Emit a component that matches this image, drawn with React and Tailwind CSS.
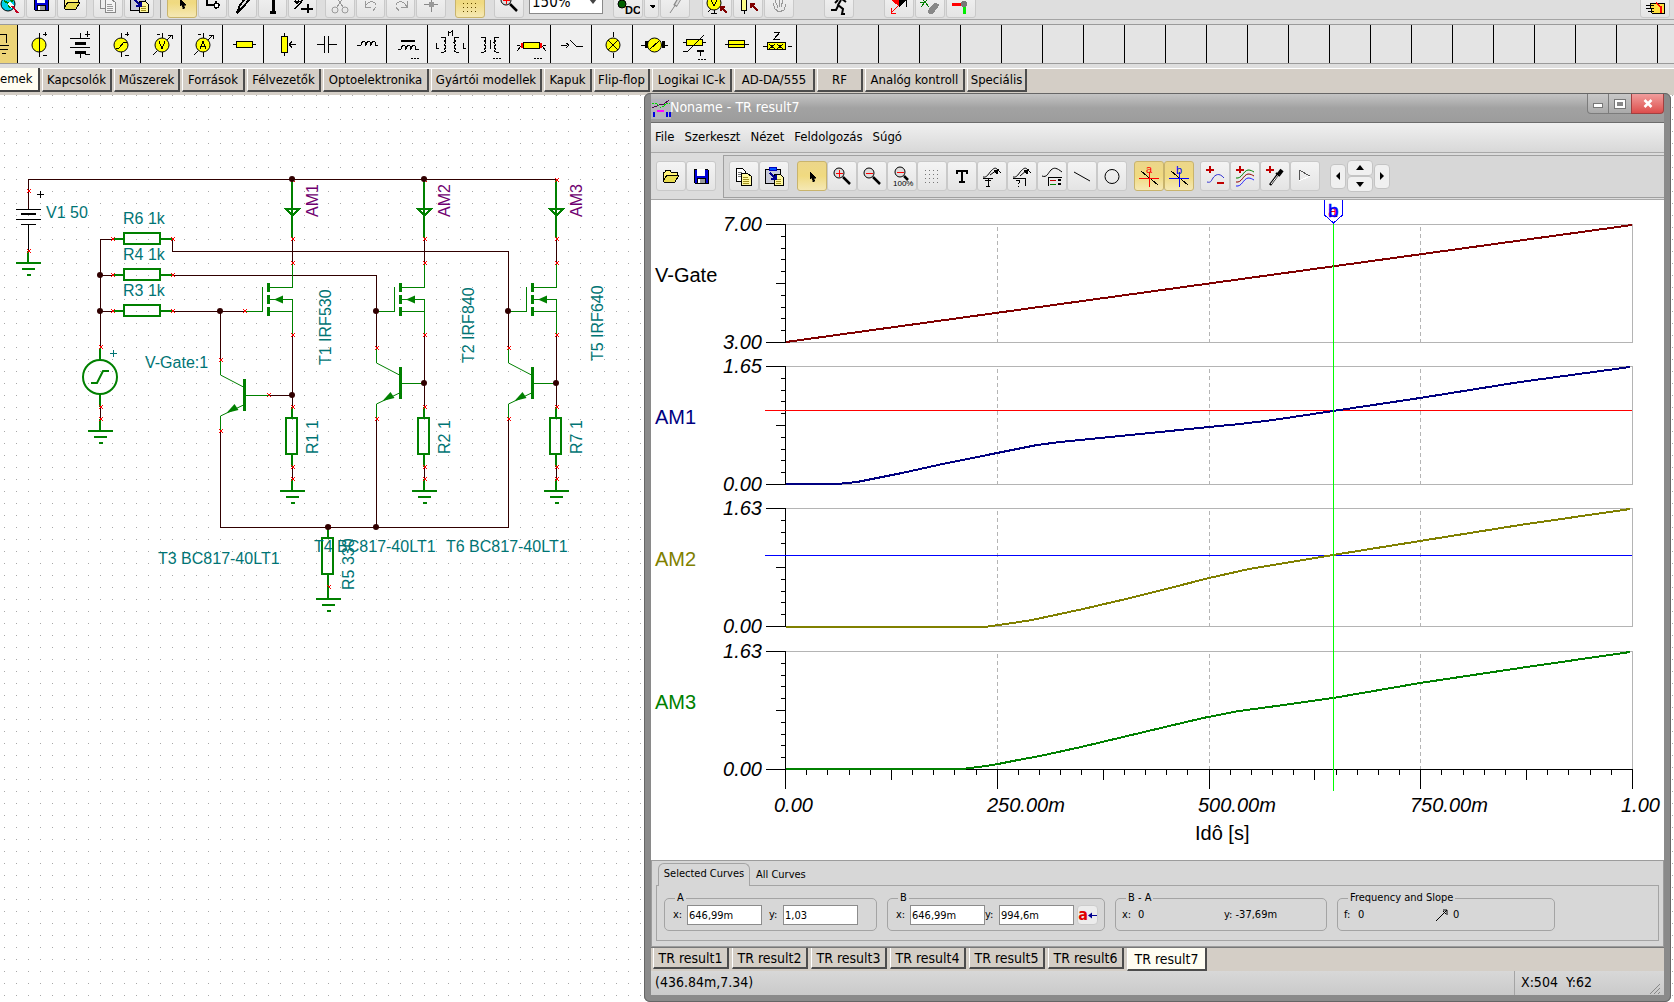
import React, { useState } from 'react';

const GRID = '#b4b4b4';
const COMP = '#008000';
const WIRE = '#300000';
const LABEL = '#007474';

/* ---------- small building blocks ---------- */

function Icon({ children, w = 24, h = 24, className = '' }) {
  return (
    <svg width={w} height={h} viewBox={`0 0 ${w} ${h}`} fill="none" stroke="#000" className={`block shrink-0 ${className}`} shapeRendering="crispEdges">
      {children}
    </svg>
  );
}

function ToolButton({ label, active, children, className = 'w-[30px]' }) {
  return (
    <button
      type="button"
      title={label}
      aria-label={label}
      className={`flex h-[30px] shrink-0 items-center justify-center rounded-[3px] border ${className} ${
        active
          ? 'border-[#c9b46c] bg-gradient-to-b from-[#ecd68a] via-[#f0da80] to-[#f5e8b4]'
          : 'border-[#c9c9c9] bg-gradient-to-b from-[#f4f4f4] to-[#e4e4e4]'
      }`}>
      {children}
    </button>
  );
}

/* ---------- toolbar icons ---------- */

const icons = {
  open: (
    <Icon>
      <path d="M4 17V8h2l1-2h4l1 2h6v3" fill="#fff27a" />
      <path d="M4 17l4-6h12l-4 7H5z" fill="#e8dc50" />
    </Icon>
  ),
  save: (
    <Icon>
      <path d="M5 5h13l1 1v13H6l-1-1z" fill="#0000d8" />
      <rect x="8" y="5" width="8" height="7" fill="#fff" stroke="none" />
      <rect x="8" y="14" width="8" height="5" fill="#9a9a9a" />
      <rect x="9" y="15" width="2" height="4" fill="#fff" stroke="none" />
    </Icon>
  ),
  copy: (
    <Icon>
      <path d="M4 4h6l3 3v10H4z" fill="#fff" />
      <path d="M6 8h4M6 10h5M6 12h3" stroke="#777" />
      <path d="M9 9h6l4 3v9H9z" fill="#fff8a0" />
      <path d="M11 13h5M11 15h6M11 17h6M11 19h6" stroke="#a09020" />
    </Icon>
  ),
  copyOff: (
    <Icon>
      <path d="M4 4h6l3 3v10H4z" fill="#eee" stroke="#888" />
      <path d="M9 8h6l4 3v10H9z" fill="#f4f4f4" stroke="#888" />
      <path d="M11 13h5M11 15h6M11 17h6M11 19h6" stroke="#999" />
    </Icon>
  ),
  paste: (
    <Icon>
      <path d="M3 5h15v14H3z" fill="#c8cad8" />
      <rect x="7" y="3" width="7" height="3" fill="#0050ff" stroke="#0000c0" />
      <path d="M12 10h6l3 3v8h-9z" fill="#fff8a0" />
      <path d="M14 15h5M14 17h5M14 19h5" stroke="#a09020" />
      <path d="M8 9l5 5M14 11v4h-5" stroke="#000090" strokeWidth="1.500" />
    </Icon>
  ),
  arrow: (
    <Icon>
      <path d="M10 8v7l2-1 1 4 2-1-1-3h2z" fill="#000" strokeWidth="0.5" />
    </Icon>
  ),
  zoomIn: (
    <Icon>
      <circle cx="9" cy="9" r="5" fill="#ddd" shapeRendering="auto" />
      <path d="M6 9h7M9.500 6v7" stroke="#f00" />
      <path d="M13 13l7 7" strokeWidth="2.500" shapeRendering="auto" />
    </Icon>
  ),
  zoomOut: (
    <Icon>
      <circle cx="9" cy="9" r="5" fill="#ddd" shapeRendering="auto" />
      <path d="M6 9h7" stroke="#f00" />
      <path d="M13 13l7 7" strokeWidth="2.500" shapeRendering="auto" />
    </Icon>
  ),
  zoomAll: (
    <Icon>
      <circle cx="10" cy="8" r="5" fill="#ddd" shapeRendering="auto" />
      <path d="M7 8h7" stroke="#f00" />
      <path d="M14 12l4 4" strokeWidth="2.500" shapeRendering="auto" />
      <text x="3" y="22" fontSize="8" fill="#000" stroke="none" fontFamily="Liberation Sans">100%</text>
    </Icon>
  ),
  grid: (
    <Icon>
      {[6, 10, 14, 18].map((y) => (
        <path key={y} d={`M5 ${y}h15`} strokeDasharray="1 3" stroke="#777" />
      ))}
    </Icon>
  ),
  gridDark: (
    <Icon>
      {[8, 12, 16, 20].map((y) => (
        <path key={y} d={`M5 ${y}h14`} strokeDasharray="1 3" stroke="#604800" />
      ))}
    </Icon>
  ),
  text: (
    <Icon>
      <path d="M7 10V7h10v3M12 7v11M9 18h6" strokeWidth="2" />
    </Icon>
  ),
  curveT: (
    <Icon>
      <path d="M3 13c4 1 6-4 8-6s4-4 6-2l4 4M10 11l7-5" shapeRendering="auto" />
      <path d="M18 6l-4 1 3 3z" fill="#000" />
      <path d="M3 14h10M8 14v8M5 16h6M6 22h4" />
    </Icon>
  ),
  curveQ: (
    <Icon>
      <path d="M3 13c4 1 6-4 8-6s4-4 6-2l4 4M10 12l7-6" shapeRendering="auto" />
      <path d="M18 6l-4 1 3 3z" fill="#000" />
      <path d="M3 14h12v8M6 16h3l1 2-2 2M8 22h1" />
    </Icon>
  ),
  legend: (
    <Icon>
      <path d="M2 12c5 2 6-3 9-6s6-2 11 2" shapeRendering="auto" />
      <path d="M8 22v-9h14" />
      <path d="M10 16h6" stroke="#c00000" />
      <path d="M10 20h6" stroke="#008000" />
      <path d="M18 15l3 2M21 15l-3 2M18 19l3 2M21 19l-3 2" />
    </Icon>
  ),
  line: (
    <Icon>
      <path d="M4 8l16 9" shapeRendering="auto" />
    </Icon>
  ),
  circle: (
    <Icon>
      <circle cx="12" cy="12.500" r="7" shapeRendering="auto" />
    </Icon>
  ),
  cursorA: (
    <Icon>
      <path d="M4 7l17 14" />
      <path d="M2 14.500h20M12.500 8v15" stroke="#f00" strokeWidth="1.500" />
      <text x="9" y="9" fontSize="11" fill="#f00" stroke="none" fontFamily="Liberation Sans">a</text>
    </Icon>
  ),
  cursorB: (
    <Icon>
      <path d="M4 7l17 14" />
      <path d="M2 14.500h20M12.500 8v15" stroke="#00f" strokeWidth="1.500" />
      <text x="9" y="10" fontSize="11" fill="#00f" stroke="none" fontFamily="Liberation Sans">b</text>
    </Icon>
  ),
  curveAdd: (
    <Icon>
      <path d="M7 2v7M3 5.500h8" stroke="#c00000" strokeWidth="2" />
      <path d="M4 18c4 1 4-1 6-4s6-6 11 0" stroke="#3030d0" shapeRendering="auto" />
      <path d="M14 19h7" stroke="#c00000" strokeWidth="2" />
    </Icon>
  ),
  curvesAdd: (
    <Icon>
      <path d="M7 2v7M3 5.500h8" stroke="#c00000" strokeWidth="2" />
      <g shapeRendering="auto">
        <path d="M3 14c6 1 7-7 12-8 3 0 4 1 6 2" stroke="#008000" />
        <path d="M3 18c6 1 7-7 12-8 3 0 4 1 6 2" stroke="#900000" />
        <path d="M3 22c6 1 7-7 12-8 3 0 4 1 6 2" stroke="#2020ff" />
      </g>
    </Icon>
  ),
  probe: (
    <Icon>
      <path d="M7 2v7M3 5.500h8" stroke="#c00000" strokeWidth="2" />
      <g shapeRendering="auto">
        <path d="M7 21l9-12" strokeWidth="2.500" />
        <path d="M8 20l7-9" stroke="#fff" />
        <path d="M13 9l4 3" strokeWidth="2" />
        <path d="M16 10l3-4" strokeWidth="4" />
      </g>
    </Icon>
  ),
  flag: (
    <Icon>
      <path d="M6 17V6l11 6" stroke="#555" />
      <path d="M6 17l11-5" stroke="#fff" />
    </Icon>
  ),
};

const topIcons = {
  globe: (
    <Icon>
      <circle cx="10" cy="13" r="7" fill="#00d0e8" shapeRendering="auto" />
      <path d="M6 10l4 2 2 5M12 8l3 3" stroke="#008000" strokeWidth="2" />
      <path d="M11 12l4 4" stroke="#fff" strokeWidth="3" />
      <path d="M14 15l6 7" strokeWidth="2" stroke="#c00020" />
    </Icon>
  ),
  wire: (
    <Icon>
      <path d="M6 6v8h3M9 14h6M15 10v8M12 14h7" strokeWidth="2" />
      <path d="M13 12h4v4h-4z" fill="#fff" />
    </Icon>
  ),
  pen: (
    <Icon>
      <path d="M6 22l3-8L17 4l3 3-9 10z" fill="#ddd" strokeWidth="2" />
    </Icon>
  ),
  textI: (
    <Icon>
      <path d="M12 4v17M9 21h6" strokeWidth="3" />
    </Icon>
  ),
  coord: (
    <Icon>
      <path d="M4 18L16 4M4 10l2 2 2-2M10 18h12M17 13v9" strokeWidth="1.500" />
    </Icon>
  ),
  cut: (
    <Icon>
      <path d="M8 6l7 10M16 6L9 16" stroke="#999" />
      <circle cx="7" cy="19" r="3" stroke="#999" shapeRendering="auto" />
      <circle cx="17" cy="19" r="3" stroke="#999" shapeRendering="auto" />
    </Icon>
  ),
  undo: (
    <Icon>
      <path d="M6 10v6h6M6 16c4-8 12-6 11 0l-3 4" stroke="#999" />
    </Icon>
  ),
  redo: (
    <Icon>
      <path d="M18 10v6h-6M18 16c-4-8-12-6-11 0l3 4" stroke="#999" />
    </Icon>
  ),
  move: (
    <Icon>
      <path d="M12 5v16M5 13h14" stroke="#888" />
      <path d="M10 11h5v5h-5z" fill="#999" stroke="none" />
    </Icon>
  ),
  dc: (
    <Icon>
      <circle cx="6" cy="13" r="4" fill="#006000" shapeRendering="auto" />
      <text x="9" y="23" fontSize="11" fontWeight="bold" fill="#000" stroke="none" fontFamily="Liberation Sans">DC</text>
    </Icon>
  ),
  probeOff: (
    <Icon>
      <g shapeRendering="auto">
        <path d="M7 22l6-9" stroke="#888" />
        <path d="M12 15l6-10" stroke="#888" strokeWidth="4" />
        <path d="M13 14l5-9" stroke="#ddd" strokeWidth="2" />
      </g>
    </Icon>
  ),
  meter: (
    <Icon>
      <circle cx="9" cy="12" r="7" fill="#ff0" shapeRendering="auto" />
      <path d="M6 9l3 6 3-6M9 19v4M3 21l3-3M6 22h6" />
      <path d="M22 22l-6-6M16 20v-4h4" stroke="#800000" strokeWidth="1.500" />
    </Icon>
  ),
  resMark: (
    <Icon>
      <path d="M5 2h5v17H5zM8 19v4" fill="#ff8" />
      <path d="M22 20l-7-7M15 17v-4h4" stroke="#800000" strokeWidth="1.500" />
    </Icon>
  ),
  star: (
    <Icon>
      <path d="M6 12l2 6 4 3 5-2 2-6M8 9l3 8M12 8l1 8M16 9l-2 7" stroke="#999" />
    </Icon>
  ),
  run: (
    <Icon>
      <path d="M9 8h6l4 3M14 9l-3 5 5 4-1 5h3M11 15l-2 4H4M11 9l-3 3" strokeWidth="2" shapeRendering="auto" />
    </Icon>
  ),
  diode: (
    <Icon>
      <path d="M4 8l7 6V5z" fill="#f00" stroke="#f00" />
      <path d="M12 6v10l7-7M19 8v8" fill="#000" />
      <path d="M12 14l-8 8M4 17v5h5" stroke="#f00" />
    </Icon>
  ),
  chip: (
    <Icon>
      <path d="M3 6l8 10M3 16L11 6M2 11h4" stroke="#008000" />
      <path d="M10 20l7-8 4 2-6 8h-4z" fill="#888" stroke="#888" />
    </Icon>
  ),
  pins: (
    <Icon>
      <path d="M3 13h11" stroke="#f00" strokeWidth="3" />
      <path d="M15 15v8" stroke="#0e0" strokeWidth="3" />
      <circle cx="15" cy="13" r="3" fill="#777" stroke="none" />
    </Icon>
  ),
  hand: (
    <Icon>
      <path d="M7 12h14v10H9z" fill="#ffe040" />
      <path d="M3 14h8M3 17h8M5 20h6" stroke="#000" />
      <path d="M13 12l5 4v6" stroke="#f00" strokeWidth="1.500" />
    </Icon>
  ),
};

/* ---------- part palette ---------- */

const YEL = '#ffff00';

const parts = [
  ['Föld', <path key="p" d="M16 9h12v9M20 20h11M22 24h8M24 28h4" />],
  ['Áramgenerátor', <g key="p"><circle cx="20" cy="20" r="7" fill={YEL} shapeRendering="auto" /><path d="M20.500 8v24M24 9h4M26 7v4M24 30h4" /></g>],
  ['Telep', <g key="p"><path d="M20.500 8v5M10 13.500h20M10 22.500h20M20.500 27v6M25 9h5M27.500 6v6M25 29h5" /><path d="M15 18h11M15 27h11" strokeWidth="3" /></g>],
  ['Feszültséggenerátor', <g key="p"><circle cx="20" cy="20" r="7" fill={YEL} shapeRendering="auto" /><path d="M20.500 8v5M20.500 27v5M24 9h4M26 7v4M24 30h4M15 23h3l5-6h3" /></g>],
  ['Voltmérő', <g key="p"><circle cx="20" cy="20" r="7" fill={YEL} shapeRendering="auto" /><path d="M20.500 8v5M20.500 27v5M15 9h3M11 30l4-4M25 15l5-5M26 10h4v4M17 16l3 8 3-8" /></g>],
  ['Ampermérő', <g key="p"><circle cx="20" cy="20" r="7" fill={YEL} shapeRendering="auto" /><path d="M20.500 8v5M20.500 27v5M15 9h3M11 30l4-4M25 15l5-5M26 10h4v4M17 24l3-8 3 8M18 21h5" /></g>],
  ['Ellenállás', <path key="p" d="M9 19.500h3M29 19.500h3M12.500 16.500h16v6h-16z" fill={YEL} />],
  ['Potenciométer', <path key="p" d="M19.500 8v3M19.500 28v3M16.500 11.500h6v16h-6zM24 19.500h7M24 19.500l3-3M24 19.500l3 3" fill={YEL} />],
  ['Kondenzátor', <path key="p" d="M11 19.500h7M23 19.500h8M18.500 11v17M22.500 11v17" strokeWidth="1.500" />],
  ['Tekercs', <path key="p" d="M10 20.500h4q0-4 3-4 2 0 2 4q0-4 3-4 2 0 2 4q0-4 3-4 2 0 2 4h2" />],
  ['Vasmagos tekercs', <g key="p"><path d="M10 24.500h3q0-4 3-4 2 0 2 4q0-4 3-4 2 0 2 4q0-4 3-4 2 0 2 4h3" /><path d="M13 16h14" strokeWidth="2" /><path d="M23 33h8" strokeDasharray="2 1" /></g>],
  ['Csatolt tekercsek', <g key="p"><path d="M12 12h3q4 2 0 4 4 1 0 4 4 2 0 4 3 2 0 3h-3M30 12h-3q-4 2 0 4-4 1 0 4-4 2 0 4-3 2 0 3h3M19 11V6l2 2 2-2v5" /><path d="M7 18v5h3M34 18v5h3" /></g>],
  ['Transzformátor', <g key="p"><path d="M11 12h3q4 2 0 4 4 1 0 4 4 2 0 4 3 2 0 3h-3M29 12h-3q-4 2 0 4-4 1 0 4-4 2 0 4-3 2 0 3h3M20 15v9" /><path d="M23 33h8" strokeDasharray="2 1" /></g>],
  ['Izzószál', <g key="p"><path d="M12.500 17.500h16v6h-16z" fill={YEL} /><path d="M11 18v5M30 18v5" stroke="#f00" strokeWidth="2" /><path d="M6 26l4-5M35 26l-4-5M6 20h3M35 20h-3" /><path d="M23 33h8" strokeDasharray="2 1" /></g>],
  ['Kapcsoló', <path key="p" d="M9 20.500h6M14 18l3 2-3 3M18 15l6 6h7" />],
  ['Lámpa', <g key="p"><circle cx="20" cy="20" r="7" fill={YEL} shapeRendering="auto" /><path d="M20.500 7v5M20.500 28v5M15 15l10 10M25 15L15 25" /></g>],
  ['Motor', <g key="p"><path d="M7 20h4M30 20h4" /><path d="M12 16v7M29 16v7" strokeWidth="3" /><circle cx="20.500" cy="20" r="7" fill={YEL} shapeRendering="auto" /><path d="M16 24l9-8" /></g>],
  ['Termisztor', <g key="p"><path d="M8 17.500h3M28 17.500h3M11.500 14.500h16v6h-16z" fill={YEL} /><path d="M8 26h5L29 10" /><path d="M22 26h7M25.500 26v5" strokeWidth="1.500" /><path d="M23 34h8" strokeDasharray="2 1" /></g>],
  ['Biztosíték', <path key="p" d="M9 19.500h24M12.500 15.500h16v7h-16zM12 19.500h16" fill={YEL} />],
  ['Impedancia', <g key="p"><path d="M6 21.500h4M31 21.500h4M10.500 17.500h18v7h-18z" fill={YEL} /><path d="M12 19l6 5M18 19l-6 5M20 19l6 5M26 19l-6 5M17 7h6l-6 7h6" /></g>],
];

function PartPalette() {
  return (
    <div className="border-y border-[#9a9a9a] bg-[#e4e4e4]">
      <div className="-ml-[23px] flex h-[38px] overflow-hidden">
        {parts.map(([name, drawing], i) => (
          <button
            key={name}
            type="button"
            title={name}
            aria-label={name}
            className={`w-[41px] shrink-0 border-r border-black pl-px ${i === 0 ? 'bg-[#ecd478]' : 'bg-[#efefef]'}`}>
            <Icon w={39} h={38}>{drawing}</Icon>
          </button>
        ))}
        {Array.from({ length: 40 }, (_, i) => (
          <div key={i} className="w-[41px] shrink-0 border-r border-black" />
        ))}
      </div>
    </div>
  );
}

function MainToolbar() {
  return (
    <div className="h-5 overflow-hidden border-b border-[#a4a4a4] bg-[#dedede]">
      {/* the bar is scrolled half out of view, so buttons hang from the bottom */}
      <div className="flex h-[18px] items-end gap-px">
        <ToolButton label="Web" className="-ml-[5px] w-[30px]">{topIcons.globe}</ToolButton>
        <ToolButton label="Mentés">{icons.save}</ToolButton>
        <ToolButton label="Megnyitás">{icons.open}</ToolButton>
        <div className="w-1 shrink-0" />
        <ToolButton label="Másolás">{icons.copyOff}</ToolButton>
        <ToolButton label="Beillesztés">{icons.paste}</ToolButton>
        <div className="mx-[5px] h-[30px] w-px shrink-0 bg-[#9a9a9a]" />
        <ToolButton label="Kijelölés" active>{icons.arrow}</ToolButton>
        <ToolButton label="Vezeték" className="w-[29px]">{topIcons.wire}</ToolButton>
        <ToolButton label="Toll" className="w-[29px]">{topIcons.pen}</ToolButton>
        <ToolButton label="Szöveg" className="w-[29px]">{topIcons.textI}</ToolButton>
        <ToolButton label="Koordináta" className="w-[29px]">{topIcons.coord}</ToolButton>
        <div className="w-1.5 shrink-0" />
        <ToolButton label="Kivágás">{topIcons.cut}</ToolButton>
        <ToolButton label="Visszavonás" className="w-[29px]">{topIcons.undo}</ToolButton>
        <ToolButton label="Ismét" className="w-[29px]">{topIcons.redo}</ToolButton>
        <ToolButton label="Mozgatás">{topIcons.move}</ToolButton>
        <div className="w-[7px] shrink-0" />
        <ToolButton label="Rács" active>{icons.gridDark}</ToolButton>
        <div className="w-[7px] shrink-0" />
        <ToolButton label="Nagyítás">{icons.zoomIn}</ToolButton>
        <div className="flex h-[30px] w-[78px] shrink-0 items-end pb-1 pl-1">
          <select aria-label="Zoom" defaultValue="150" className="h-6 w-full appearance-none border border-[#8a8a8a] bg-white pl-0.5 text-[15px] leading-5">
            <option value="150">150%</option>
            <option value="100">100%</option>
          </select>
          <svg width="12" height="8" viewBox="0 0 12 8" className="pointer-events-none mb-2 -ml-4 shrink-0">
            <path d="M2 1h8L6 6z" fill="#444" />
          </svg>
        </div>
        <div className="w-2 shrink-0" />
        <ToolButton label="DC analízis">{topIcons.dc}</ToolButton>
        <ToolButton label="DC menü" className="w-[15px]">
          <Icon w={8} h={12}><path d="M2 8h5l-2 3z" fill="#000" /></Icon>
        </ToolButton>
        <ToolButton label="Mérőcsúcs">{topIcons.probeOff}</ToolButton>
        <div className="w-2.5 shrink-0" />
        <ToolButton label="Mérő">{topIcons.meter}</ToolButton>
        <ToolButton label="Ellenállás jelölő">{topIcons.resMark}</ToolButton>
        <ToolButton label="Csillag">{topIcons.star}</ToolButton>
        <div className="w-7 shrink-0" />
        <ToolButton label="Futtatás">{topIcons.run}</ToolButton>
        <div className="w-7 shrink-0" />
        <ToolButton label="Dióda">{topIcons.diode}</ToolButton>
        <ToolButton label="Chip">{topIcons.chip}</ToolButton>
        <ToolButton label="Lábak">{topIcons.pins}</ToolButton>
        <div className="grow" />
        <ToolButton label="Keresés" className="mr-1 w-[30px]">{topIcons.hand}</ToolButton>
      </div>
    </div>
  );
}

const PART_TABS = [
  ['Kapcsolók', 'w-[70px]'],
  ['Műszerek', 'w-[66px]'],
  ['Források', 'w-[63px]'],
  ['Félvezetők', 'w-[74px]'],
  ['Optoelektronika', 'w-[106px]'],
  ['Gyártói modellek', 'w-[111px]'],
  ['Kapuk', 'w-[48px]'],
  ['Flip-flop', 'w-[56px]'],
  ['Logikai IC-k', 'w-[80px]'],
  ['AD-DA/555', 'w-[81px]'],
  ['RF', 'w-[46px]'],
  ['Analóg kontroll', 'w-[100px]'],
  ['Speciális', 'w-[60px]'],
];

function PartTabs() {
  return (
    <div className="mt-1 flex h-[27px] items-start gap-0.5 border-t border-white bg-[#d4cec6] text-[13px] leading-[22px]">
      <button type="button" className="-mt-px h-6 w-10 shrink-0 border-r-2 border-b-2 border-[#444] bg-[#fffdf2] pr-1.5 text-right">
        emek
      </button>
      {PART_TABS.map(([name, width]) => (
        <button key={name} type="button" className={`h-[23px] shrink-0 border-r-2 border-b-2 border-l border-[#4c4c4c] border-l-white bg-[#d4cec6] whitespace-nowrap ${width}`}>
          <span className="-mx-2">{name}</span>
        </button>
      ))}
    </div>
  );
}

/* ---------- schematic ---------- */

const Pin = ({ x, y }) => (
  <path d={`M${x - 2} ${y - 2}l4 4M${x + 2} ${y - 2}l-4 4`} stroke="#ff0000" strokeWidth="1" shapeRendering="auto" />
);

const Node = ({ x, y }) => <circle cx={x} cy={y} r="3" fill={WIRE} shapeRendering="auto" />;

const Ground = ({ x, y }) => (
  <path d={`M${x} ${y - 12}v11M${x - 12} ${y}h25M${x - 6} ${y + 6}h13M${x - 1} ${y + 12}h4`} stroke={COMP} strokeWidth="2" />
);

function ResistorH({ y, label }) {
  return (
    <g>
      <path d={`M114 ${y}h10M160 ${y}h12`} stroke={COMP} strokeWidth="2" />
      <rect x="124" y={y - 6} width="36" height="11" stroke={COMP} strokeWidth="2" />
      <Pin x={113} y={y} />
      <Pin x={173} y={y} />
      <text x="123" y={y - 15} fill={LABEL}>{label}</text>
    </g>
  );
}

function ResistorV({ x, y, label }) {
  return (
    <g>
      <path d={`M${x} ${y}v11M${x} ${y + 47}v13`} stroke={COMP} strokeWidth="2" />
      <rect x={x - 6} y={y + 11} width="11" height="36" stroke={COMP} strokeWidth="2" />
      <Pin x={x + 1} y={y} />
      <Pin x={x + 1} y={y + 60} />
      <VText x={x + 26} y={y + 63 - (label.length > 4 ? 0 : 16)} fill={LABEL}>{label}</VText>
    </g>
  );
}

const VText = ({ x, y, fill, children }) => (
  <text transform={`translate(${x} ${y}) rotate(-90)`} fill={fill}>{children}</text>
);

/* ammeter, mosfet and source resistor of one branch, x is the drain line */
function Branch({ x, am, res }) {
  return (
    <g>
      <path d={`M${x + 0.5} 239v24M${x + 0.5} 335v73M${x + 0.5} 467v13`} stroke={WIRE} />
      <path d={`M${x} 180v58M${x - 6} 209h13l-6 6h-1z`} stroke={COMP} strokeWidth="2" />
      <path d={`M${x + 0.5} 264v23.500h-23M${x - 22} 299.500h22.500v36M${x - 22} 311.500h22M${x - 29.5} 287v24.500`} stroke={COMP} />
      <path d={`M${x - 23.5} 283v9M${x - 23.5} 295v9M${x - 23.5} 307v9`} stroke={COMP} strokeWidth="3" />
      <path d={`M${x - 18} 299.500l9-4v8z`} fill={COMP} shapeRendering="auto" />
      <Ground x={x} y={491} />
      <ResistorV x={x} y={407} label={res} />
      {[180, 239, 263, 335, 479].map((y) => (
        <Pin key={y} x={x + 1} y={y} />
      ))}
      <VText x={x + 26} y={217} fill="#700070">{am}</VText>
    </g>
  );
}

/* npn transistor, x/y is where the collector line bends */
function Npn({ x, y, baseEnd }) {
  return (
    <g>
      <path d={`M${x} ${y - 15}v15M${x} ${y + 41}v15M${x + 24} ${y + 20.500}H${baseEnd}`} stroke={COMP} />
      <path d={`M${x} ${y}l23 12M${x + 23} ${y + 30}l-23 11`} stroke={COMP} shapeRendering="auto" />
      <path d={`M${x + 24} ${y + 4}v32`} stroke={COMP} strokeWidth="3" />
      <path d={`M${x + 6} ${y + 38}l8-9 4 6z`} fill={COMP} shapeRendering="auto" />
      <Pin x={x + 0.5} y={y - 15} />
      <Pin x={x + 0.5} y={y + 56} />
    </g>
  );
}

function Schematic() {
  return (
    <svg
      width="644"
      height="560"
      viewBox="0 95 644 560"
      fill="none"
      className="relative block shrink-0"
      shapeRendering="crispEdges"
      fontFamily="Liberation Sans, Arial, sans-serif"
      fontSize="16">
      {/* wires */}
      <g stroke={WIRE}>
        <path d="M28.500 209V179.500H557" />
        <path d="M113 239.500H100.500V347M172.500 239v12.500H508.500V347M100 275.500h13M173 275.500H376.500V347M100 311.500h13M173 311.500h72M220.500 311v48" />
        <path d="M269 395.500h23M220.500 431v96.500H508.500V419M376.500 419v108M100.500 407v12" />
      </g>

      {/* battery */}
      <g stroke="#000">
        <path d="M16 209.500h25M16 219.500h25M21 224.500h15M28.500 224v27M37 194.500h7M40.500 191v7" />
        <path d="M21 214h15" strokeWidth="2" />
      </g>
      <Ground x={28} y={263} />
      <Pin x={29} y={191} />
      <Pin x={29} y={251} />
      <text x="46" y="218" fill={LABEL}>V1 50</text>

      <ResistorH y={239} label="R6 1k" />
      <ResistorH y={275} label="R4 1k" />
      <ResistorH y={311} label="R3 1k" />

      {/* gate voltage generator */}
      <g stroke={COMP} strokeWidth="2">
        <path d="M100 348v12M100 394v13" />
        <circle cx="100" cy="377" r="17" shapeRendering="auto" />
        <path d="M91 383h6l6-12h6" shapeRendering="auto" />
      </g>
      <path d="M110 353.500h7M113.500 350v7" stroke={LABEL} />
      <Ground x={100} y={431} />
      <Pin x={101} y={347} />
      <Pin x={101} y={407} />
      <Pin x={101} y={419} />
      <text x="145" y="368" fill={LABEL}>V-Gate:1</text>

      <Branch x={292} am="AM1" res="R1 1" />
      <Branch x={424} am="AM2" res="R2 1" />
      <Branch x={556} am="AM3" res="R7 1" />
      <path d="M245 311.500h18M377 311.500h18M509 311.500h18" stroke={COMP} />
      <Pin x={245} y={311} />
      <Pin x={269} y={395} />

      <Npn x={220.5} y={375} baseEnd={269} />
      <Npn x={376.5} y={363} baseEnd={424} />
      <Npn x={508.5} y={363} baseEnd={556} />

      <ResistorV x={328} y={527} label="R5 330" />
      <Ground x={328} y={599} />

      {[[292, 179], [424, 179], [100, 275], [100, 311], [220, 311], [376, 311], [508, 311], [292, 395], [424, 383], [556, 383], [328, 527], [376, 527]].map(([x, y]) => (
        <Node key={`${x}-${y}`} x={x} y={y} />
      ))}

      <VText x={331} y={365} fill={LABEL}>T1 IRF530</VText>
      <VText x={474} y={363} fill={LABEL}>T2 IRF840</VText>
      <VText x={603} y={361} fill={LABEL}>T5 IRF640</VText>
      <text x="158" y="564" fill={LABEL}>T3 BC817-40LT1</text>
      <text x="314" y="552" fill={LABEL}>T4 BC817-40LT1</text>
      <text x="446" y="552" fill={LABEL}>T6 BC817-40LT1</text>
    </svg>
  );
}

/* ---------- result diagram ---------- */

const LEFT = 785.5;
const RIGHT = 1632.5;
const CURSOR = 1333.5;

const traces = [
  { name: 'V-Gate', top: 224.5, max: '7.00', min: '3.00', ink: '#000', color: '#800000', points: '786,342 1632,225' },
  {
    name: 'AM1', top: 366.5, max: '1.65', min: '0.00', ink: '#000080', color: '#000080',
    points: '786,484 837,484 848,483 857,482 902,473 938,465 997,453 1037,445 1060,442 1100,438 1150,433 1209,427 1240,424 1273,420 1333,411 1420,398 1520,382 1630,367',
  },
  {
    name: 'AM2', top: 508.5, max: '1.63', min: '0.00', ink: '#808000', color: '#808000',
    points: '786,627 984,627 1006,624 1032,620 1083,609 1126,599 1170,588 1209,578 1249,569 1273,565 1333,555 1420,541 1520,525 1630,509',
  },
  {
    name: 'AM3', top: 651.5, max: '1.63', min: '0.00', ink: '#008000', color: '#008000',
    points: '786,769 962,769 986,766 998,764 1018,760 1040,756 1081,747 1144,732 1203,718 1239,711 1269,707 1333,698 1420,683 1520,668 1630,652',
  },
];

function Diagram() {
  return (
    <svg
      viewBox="651 200 1013 660"
      fill="none"
      className="block h-auto w-full bg-white"
      shapeRendering="crispEdges"
      fontFamily="Liberation Sans, Arial, sans-serif"
      fontSize="20">
      {traces.map((t) => {
        const bottom = t.top + 118;
        return (
          <g key={t.name}>
            <path d={`M${LEFT} ${t.top}H${RIGHT}V${bottom}H${LEFT}`} stroke={GRID} />
            {[997.5, 1209.5, 1420.5].map((x) => (
              <path key={x} d={`M${x} ${t.top + 2}V${bottom}`} stroke={GRID} strokeDasharray="4 3" />
            ))}
            <path d={`M766 ${t.top}H${LEFT}V${bottom}H766`} stroke="#000" />
            {Array.from({ length: 9 }, (_, i) => {
              const y = Math.floor(t.top + 11.8 * (i + 1)) + 0.5;
              return <path key={i} d={`M${i === 4 ? 776 : 781} ${y}H785`} stroke="#000" />;
            })}
            <text x="655" y={t.top + 57.5} fill={t.ink}>{t.name}</text>
            <g fill="#000" fontStyle="italic" textAnchor="end">
              <text x="762" y={t.top + 6.5}>{t.max}</text>
              <text x="762" y={bottom + 6.5}>{t.min}</text>
            </g>
          </g>
        );
      })}

      {/* time axis */}
      <path d={`M${LEFT} 769.500H${RIGHT}`} stroke="#000" />
      {Array.from({ length: 41 }, (_, i) => {
        const len = i % 10 === 0 ? 19 : i % 5 === 0 ? 10 : 5;
        return <path key={i} d={`M${Math.round(785 + 21.175 * i) + 0.5} 770v${len}`} stroke="#000" />;
      })}
      <g fill="#000" fontStyle="italic">
        <text x="774" y="812">0.00</text>
        <text x="987" y="812">250.00m</text>
        <text x="1198" y="812">500.00m</text>
        <text x="1410" y="812">750.00m</text>
        <text x="1621" y="812">1.00</text>
      </g>
      <text x="1195" y="840" fill="#000">Idô [s]</text>

      {/* cursor levels */}
      <path d="M765 410.500H1632" stroke="#ff0000" />
      <path d="M765 555.500H1632" stroke="#0000ff" />

      {traces.map((t) => (
        <polyline key={t.name} points={t.points} stroke={t.color} strokeWidth="2" />
      ))}

      <path d={`M${CURSOR} 223V791`} stroke="#00ff00" />
      <path d="M1324.500 200v15l9 8 9-8v-15" stroke="#0000ff" />
      <text x="1328" y="217" fontSize="17" fill="#ff0000">a</text>
      <text x="1328" y="217" fontSize="19" fill="#0000ff" stroke="#0000ff" strokeWidth="0.500">b</text>
    </svg>
  );
}

/* ---------- result window ---------- */

function TitleBar() {
  return (
    <div className="flex h-7 items-start bg-gradient-to-b from-[#c4c4c4] via-[#a2a2a2] to-[#9c9c9c]">
      <svg width="20" height="20" viewBox="0 0 20 20" fill="none" className="mt-[5px] shrink-0" shapeRendering="crispEdges">
        <rect width="20" height="20" fill="#b4b4bc" />
        <path d="M1 9l7-3 5-1 5-4" stroke="#500050" />
        <path d="M1 4h4l5 5 6-5h3" stroke="#00d800" strokeDasharray="2 1" />
        <path d="M6 12h7" stroke="#f0f" strokeWidth="2" />
        <path d="M2.500 13v5M15.500 13v5M18.500 13v5" stroke="#0000e0" strokeWidth="2" />
      </svg>
      <h1 className="-ml-px mt-1 grow text-sm leading-[18px] font-medium text-white">Noname - TR result7</h1>
      <button type="button" aria-label="Minimize" className="flex h-5 w-[22px] items-center justify-center rounded-bl-sm border border-t-0 border-[#7c7c7c] bg-gradient-to-b from-[#c8c8c8] to-[#aaa]">
        <span className="mt-1 h-[5px] w-2.5 border border-[#777] bg-white" />
      </button>
      <button type="button" aria-label="Maximize" className="flex h-5 w-[22px] items-center justify-center border-b border-[#7c7c7c] bg-gradient-to-b from-[#c8c8c8] to-[#aaa]">
        <span className="h-2 w-2.5 border-2 border-white bg-[#888] outline outline-[#777]" />
      </button>
      <button type="button" aria-label="Close" className="flex h-5 w-[33px] items-center justify-center rounded-br-sm border border-t-0 border-[#a04040] bg-gradient-to-b from-[#f09c9c] to-[#dc4c4c]">
        <svg width="10" height="9" viewBox="0 0 10 9" fill="none">
          <path d="M1.500 1l7 7M8.500 1l-7 7" stroke="#fff" strokeWidth="2.500" />
        </svg>
      </button>
    </div>
  );
}

const Arrow = ({ d }) => (
  <svg width="8" height="8" viewBox="0 0 8 8" className="block">
    <path d={d} fill="#000" />
  </svg>
);

function ResultToolbar() {
  const nav = 'flex items-center justify-center rounded-sm border border-[#c4c4c4] bg-[#f0f0f0]';
  return (
    <div className="flex h-12 items-center border-y border-[#a8a8a8] bg-[#dcdcdc] pl-[5px]">
      <div className="flex">
        <ToolButton label="Open">{icons.open}</ToolButton>
        <ToolButton label="Save">{icons.save}</ToolButton>
      </div>
      <div className="ml-[7px] flex h-[43px] grow items-center border border-r-0 border-[#a0a0a0] bg-[#d7d7d7] pl-[5px]">
        <ToolButton label="Copy">{icons.copy}</ToolButton>
        <ToolButton label="Paste">{icons.paste}</ToolButton>
        <div className="ml-2 flex">
          <ToolButton label="Select" active>{icons.arrow}</ToolButton>
          <ToolButton label="Zoom in">{icons.zoomIn}</ToolButton>
          <ToolButton label="Zoom out">{icons.zoomOut}</ToolButton>
          <ToolButton label="Zoom 100%">{icons.zoomAll}</ToolButton>
          <ToolButton label="Grid">{icons.grid}</ToolButton>
          <ToolButton label="Text">{icons.text}</ToolButton>
          <ToolButton label="Curve label">{icons.curveT}</ToolButton>
          <ToolButton label="Curve query">{icons.curveQ}</ToolButton>
          <ToolButton label="Legend">{icons.legend}</ToolButton>
          <ToolButton label="Line">{icons.line}</ToolButton>
          <ToolButton label="Ellipse">{icons.circle}</ToolButton>
        </div>
        <div className="ml-[7px] flex">
          <ToolButton label="Cursor a" active>{icons.cursorA}</ToolButton>
          <ToolButton label="Cursor b" active>{icons.cursorB}</ToolButton>
        </div>
        <div className="ml-1.5 flex">
          <ToolButton label="Add curve">{icons.curveAdd}</ToolButton>
          <ToolButton label="Add curves">{icons.curvesAdd}</ToolButton>
          <ToolButton label="Add probe">{icons.probe}</ToolButton>
          <ToolButton label="Flag">{icons.flag}</ToolButton>
        </div>
        <div className="ml-2.5 flex items-center gap-px">
          <button type="button" aria-label="Left" className={`h-[25px] w-4 ${nav}`}><Arrow d="M6 0v8L2 4z" /></button>
          <div>
            <button type="button" aria-label="Up" className={`h-4 w-[26px] ${nav}`}><Arrow d="M0 6h8L4 1z" /></button>
            <button type="button" aria-label="Down" className={`h-4 w-[26px] ${nav}`}><Arrow d="M0 2h8L4 7z" /></button>
          </div>
          <button type="button" aria-label="Right" className={`h-[25px] w-4 ${nav}`}><Arrow d="M2 0v8l4-4z" /></button>
        </div>
      </div>
    </div>
  );
}

function Group({ title, className, children }) {
  return (
    <fieldset className={`h-10 shrink-0 rounded-[5px] border border-[#a4a4a4] ${className}`}>
      <legend className="ml-2.5 px-0.5 leading-[14px]">{title}</legend>
      <div className="flex h-5 items-center">{children}</div>
    </fieldset>
  );
}

function Field({ label, value, className = '' }) {
  return (
    <label className={`flex items-center ${className}`}>
      <span className="w-3.5">{label}</span>
      <input defaultValue={value} className="h-5 w-[75px] border border-[#8c8c8c] bg-white px-px" />
    </label>
  );
}

function CursorPanel() {
  return (
    <div className="border border-[#9c9c9c] bg-[#d7d7d7] px-1 pt-0.5 pb-[5px] text-[11px] leading-[14px]">
      <div className="flex h-[22px] pl-0.5">
        <button type="button" className="relative -mb-px w-[92px] rounded-t-md border border-b-0 border-[#a4a4a4] bg-[#d7d7d7] pb-0.5">Selected Curves</button>
        <button type="button" className="px-1.5 pt-0.5">All Curves</button>
      </div>
      <div className="flex h-14 items-start gap-2.5 overflow-hidden border border-[#a4a4a4] pt-[5px] pl-[7px]">
        <Group title="A" className="w-[213px]">
          <Field label="x:" value="646,99m" className="ml-2" />
          <Field label="y:" value="1,03" className="ml-[7px]" />
        </Group>
        <Group title="B" className="w-[218px]">
          <Field label="x:" value="646,99m" className="ml-2" />
          <Field label="y:" value="994,6m" />
          <button type="button" aria-label="Copy a" className="ml-[3px] flex h-5 w-[21px] items-center justify-center rounded-sm border border-[#ccc] bg-[#ececec]">
            <span className="text-base leading-4 font-bold text-[#e00000]">a</span>
            <svg width="9" height="7" viewBox="0 0 9 7" fill="none" className="shrink-0">
              <path d="M1 3.500h8" stroke="#000090" />
              <path d="M4 0.500v6L0 3.500z" fill="#000090" />
            </svg>
          </button>
        </Group>
        <Group title="B - A" className="w-[212px]">
          <span className="ml-1.5 w-4">x:</span>
          <span className="w-[86px]">0</span>
          <span>y: -37,69m</span>
        </Group>
        <Group title="Frequency and Slope" className="w-[218px]">
          <span className="ml-1.5 w-3.5">f:</span>
          <span className="w-[77px]">0</span>
          <svg width="14" height="14" viewBox="0 0 14 14" fill="none" stroke="#000" className="mr-1">
            <path d="M1 13L12 2M8 2h4v5M8 3l3 3" />
          </svg>
          <span>0</span>
        </Group>
      </div>
    </div>
  );
}

function ResultWindow() {
  const [active, setActive] = useState(7);
  return (
    <section className="relative -mt-0.5 mr-[3px] min-w-0 flex-1 rounded-t-md rounded-b-md border-t border-r-[7px] border-b-[7px] border-l-[7px] border-[#8a8a8a] border-t-[#666] outline-1 -outline-offset-1 outline-[#666]">
      <TitleBar />
      <nav className="flex h-[30px] gap-2.5 border-t border-[#6c6c6c] bg-gradient-to-b from-[#f0f0f0] to-[#d8d8d8] pt-1 pl-1 text-[13px] leading-5">
        {['File', 'Szerkeszt', 'Nézet', 'Feldolgozás', 'Súgó'].map((m) => (
          <button key={m} type="button" className="h-5">{m}</button>
        ))}
      </nav>
      <ResultToolbar />
      <Diagram />
      <CursorPanel />
      <div className="flex h-6 items-start gap-[3px] border-t border-[#777] bg-[#d4cec6] pl-0.5 text-sm leading-5">
        {[1, 2, 3, 4, 5, 6, 7].map((n) => (
          <button
            key={n}
            type="button"
            onClick={() => setActive(n)}
            className={`shrink-0 border-r-2 border-b-2 border-l border-[#4c4c4c] border-l-white whitespace-nowrap ${
              active === n ? 'h-[23px] w-20 bg-[#fffdf2]' : 'h-[21px] w-[76px] bg-[#d4cec6]'
            }`}>
            TR result{n}
          </button>
        ))}
      </div>
      <footer className="flex h-6 items-stretch bg-gradient-to-b from-[#d8d8d8] to-[#cacaca] text-sm leading-[22px]">
        <span className="grow pl-1">(436.84m,7.34)</span>
        <span className="w-[135px] border-l border-[#a4a4a4] pl-1.5 whitespace-pre">X:504  Y:62</span>
        <svg width="12" height="12" viewBox="0 0 12 12" stroke="#888" className="mr-[3px] self-end">
          <path d="M1 11L11 1M5 11l6-6M9 11l2-2" />
        </svg>
      </footer>
    </section>
  );
}

export default function App() {
  return (
    <div className="flex min-h-screen flex-col overflow-hidden bg-[#dedede] font-['DejaVu_Sans_Condensed','Noto_Sans',sans-serif] text-black">
      <MainToolbar />
      <div className="mt-1">
        <PartPalette />
      </div>
      <PartTabs />
      <main className="relative flex flex-1 items-start bg-white">
        <svg className="absolute inset-0 h-full w-full" shapeRendering="crispEdges">
          <defs>
            <pattern id="dots" width="12" height="12" patternUnits="userSpaceOnUse">
              <rect x="4" y="0" width="1" height="1" fill="#a8a8a8" />
            </pattern>
          </defs>
          <rect width="100%" height="100%" fill="url(#dots)" />
        </svg>
        <Schematic />
        <ResultWindow />
      </main>
    </div>
  );
}
